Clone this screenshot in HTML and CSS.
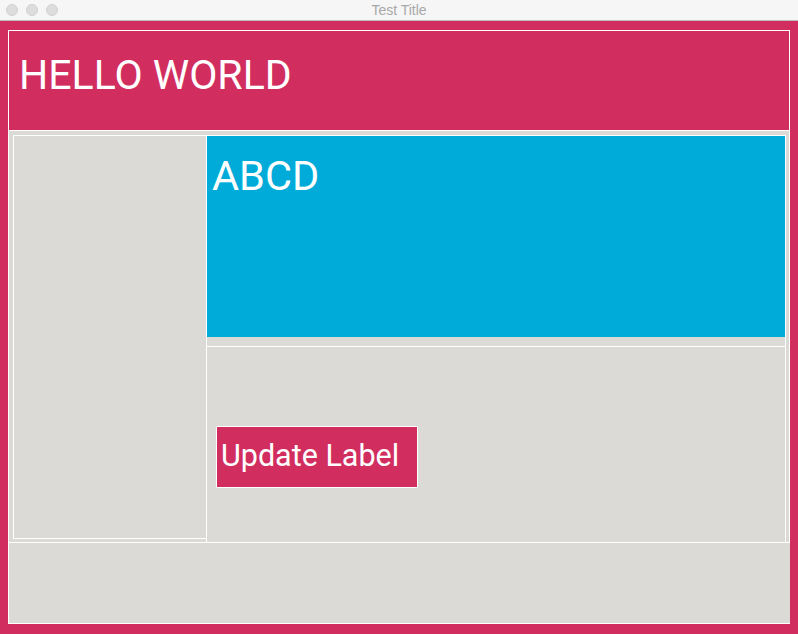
FILE: index.html
```html
<!DOCTYPE html>
<html>
<head>
<meta charset="utf-8">
<title>Test Title</title>
<link rel="stylesheet" href="styles.css">
</head>
<body>
<div class="titlebar">
  <div class="lights"><span class="light"></span><span class="light"></span><span class="light"></span></div>
  <div class="title">Test Title</div>
  <div class="tb-end"></div>
</div>
<div class="window">
  <div class="root">
    <div class="header"><span class="header-text">HELLO WORLD</span></div>
    <div class="mid">
      <div class="left-col"></div>
      <div class="right-col">
        <div class="blue"><span class="abcd">ABCD</span></div>
        <div class="spacer"></div>
        <div class="lower"><div class="btn">Update Label</div></div>
      </div>
    </div>
    <div class="bottom"></div>
  </div>
</div>
</body>
</html>
```
FILE: styles.css
```css
* { box-sizing: border-box; margin: 0; padding: 0; }
html, body { width: 798px; height: 634px; overflow: hidden; }
body { background: #d12e5f; font-family: Roboto, "Liberation Sans", sans-serif; }

.titlebar {
  height: 21px;
  background: #f6f6f6;
  border-bottom: 1px solid #bcbcbc;
  display: grid;
  grid-template-columns: 1fr auto 1fr;
  align-items: center;
}
.lights { display: flex; gap: 8px; padding-left: 6px; }
.light {
  width: 12px; height: 12px; border-radius: 50%;
  background: #dddddd; border: 1px solid #d2d2d2;
}
.title { font: 14px "Liberation Sans", Arial, sans-serif; color: #a8a8a8; line-height: 20px; }

.window { padding: 9px 0 0 8px; }
.root { width: 782px; }

.header {
  height: 100px;
  border: 1px solid #ffffff;
  border-bottom: none;
  padding: 20px 0 0 10px;
  color: #ffffff;
  font-size: 41px;
  line-height: normal;
}

.mid {
  height: 413px;
  border: 1px solid #ffffff;
  background: #dbdad6;
  display: flex;
  align-items: flex-start;
  padding: 4px 3px 0 4px;
}
.left-col {
  width: 193px;
  height: 404px;
  border: 1px solid #ffffff;
  border-right: none;
}
.right-col {
  width: 580px;
  height: 407px;
  border: 1px solid #ffffff;
  border-bottom: none;
  display: flex;
  flex-direction: column;
}
.blue {
  height: 201px;
  background: #00abd9;
  padding: 15px 0 0 5px;
  color: #ffffff;
  font-size: 41.5px;
  line-height: normal;
}
.spacer { height: 9px; }
.lower {
  flex: 1;
  border-top: 1px solid #ffffff;
  padding: 79px 0 0 9px;
}
.btn {
  width: 202px;
  height: 62px;
  border: 1px solid #ffffff;
  background: #d12e5f;
  color: #ffffff;
  font-size: 30.5px;
  line-height: normal;
  padding: 11px 0 0 4px;
}

.bottom {
  height: 81px;
  border-left: 1px solid #ffffff;
  border-bottom: 1px solid #ffffff;
  background: #dbdad6;
}
```
